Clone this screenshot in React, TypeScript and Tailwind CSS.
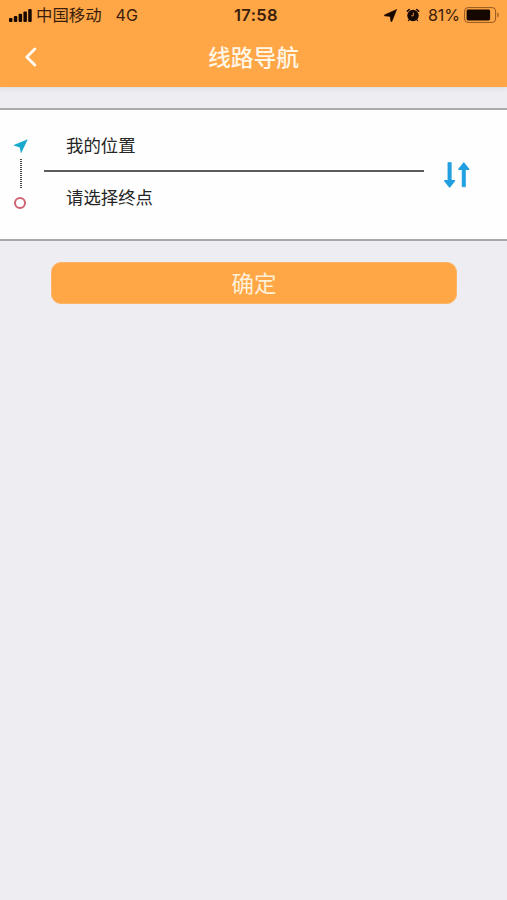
import { useState } from "react";

const signalBars = [
  { x: 0, height: 4 },
  { x: 4.8, height: 6 },
  { x: 9.6, height: 8.3 },
  { x: 14.4, height: 10.6 },
  { x: 19.2, height: 13 },
];

function StatusBar() {
  return (
    <div className="grid h-[30px] grid-cols-[1fr_auto_1fr] items-center pl-[9px] pr-[7px] text-[#3b1e0b]">
      <div className="flex items-center">
        <svg width="23" height="13" viewBox="0 0 23 13" className="fill-[#160800]">
          {signalBars.map((bar) => (
            <rect key={bar.x} x={bar.x} y={13 - bar.height} width="3.5" height={bar.height} rx="1" />
          ))}
        </svg>
        <span className="ml-[4px] text-[16.4px] leading-none">中国移动</span>
        <span className="ml-[14px] text-[16px] leading-none">4G</span>
      </div>
      <span className="pl-[3px] text-[16.5px] font-semibold leading-none tracking-[0.35px]">17:58</span>
      <div className="flex items-center justify-end">
        <svg width="13" height="13" viewBox="0 0 13 13" className="fill-[#160800]">
          <path d="M12.6.5 7.9 12.4 6.9 12.4 6.2 7.4.5 6.8.5 5.9Z" stroke="#160800" strokeWidth=".6" strokeLinejoin="round" />
        </svg>
        <svg width="14" height="14" viewBox="0 0 14 14" className="ml-[9px]">
          <circle cx="7" cy="7.5" r="5.7" fill="#160800" />
          <path d="M1.4 3.2 3.3 1.5M12.6 3.2 10.7 1.5" stroke="#160800" strokeWidth="1.6" strokeLinecap="round" />
          <path d="m3.2 11.6-1 1.4M10.8 11.6l1 1.4" stroke="#160800" strokeWidth="1.2" />
          <path d="M7.3 4.6v3.2H5.2" fill="none" stroke="#d68a3c" strokeWidth="1" />
        </svg>
        <span className="ml-[8px] text-[16px] leading-none">81%</span>
        <svg width="36" height="16" viewBox="0 0 36 16" className="ml-[4px]">
          <rect x=".6" y=".6" width="31" height="14.8" rx="3.4" fill="none" stroke="#96581f" strokeWidth="1" />
          <rect x="2.6" y="2.6" width="23.5" height="10.8" rx="1.4" fill="#160800" />
          <path d="M33.4 5.6c1.8.5 1.8 4.3 0 4.8Z" fill="#96581f" />
        </svg>
      </div>
    </div>
  );
}

function SwapIcon() {
  return (
    <svg width="26" height="26" viewBox="0 0 26 26" fill="#219fe0" stroke="#219fe0" strokeLinejoin="round">
      <path d="M3.9.5h3.4v18H3.9ZM18.1 7h3.4v17.8h-3.4Z" strokeWidth=".6" />
      <path d="M.8 18.8h9.6l-4.8 6ZM15 7.2h9.6l-4.8-6Z" strokeWidth="1.6" />
    </svg>
  );
}

export default function App() {
  const [points, setPoints] = useState(["我的位置", "请选择终点"]);

  return (
    <div className="min-h-screen bg-[#eeedf2] font-['Inter','Noto_Sans_CJK_SC',sans-serif]">
      <header className="h-[87px] bg-[#ffa646] shadow-[0_1px_5px_rgba(120,90,150,0.16)]">
        <StatusBar />
        <div className="grid h-[54px] grid-cols-[1fr_auto_1fr] items-center">
          <button type="button" aria-label="返回" className="w-fit pl-[24px]">
            <svg width="14" height="20" viewBox="0 0 14 20" fill="none" stroke="#fffaf2">
              <path d="m10.8 2-8 8 8 8" strokeWidth="2.9" strokeLinecap="round" strokeLinejoin="round" />
            </svg>
          </button>
          <h1 className="pt-[3px] text-[22.8px] font-medium leading-none text-[#fff6e6]">线路导航</h1>
        </div>
      </header>

      <section className="mt-[21px] flex h-[133px] border-y-2 border-[#a9a8ac] bg-[#fefefe]">
        <div className="flex w-[41px] shrink-0 flex-col items-center pt-[29px]">
          <svg width="15" height="15" viewBox="0 0 15 15" fill="#18a9cc">
            <path d="M14.8.2 8 14.4 6.8 8.4.2 6.2Z" />
          </svg>
          <svg width="2" height="30" viewBox="0 0 2 30" className="ml-px mt-[5px]">
            <path d="M1 0v30" stroke="#444" strokeWidth="2" strokeDasharray="1 1" />
          </svg>
          <div className="mr-px mt-[8px] h-[12px] w-[12px] rounded-full border-[2.5px] border-[#cf6372]" />
        </div>
        <div className="ml-[3px] w-[380px] text-[17.4px] leading-[26px] text-[#252525]">
          <div className="pl-[22px] pt-[23px] pb-[11px]">{points[0]}</div>
          <div className="h-[2px] bg-[#5c5c5c]" />
          <div className="pl-[22px] pt-[13px]">{points[1]}</div>
        </div>
        <button
          type="button"
          aria-label="交换"
          onClick={() => setPoints([points[1], points[0]])}
          className="ml-[20px] mt-[52px] h-[26px] w-[26px]"
        >
          <SwapIcon />
        </button>
      </section>

      <button
        type="button"
        className="ml-[51px] mt-[21px] flex h-[42px] w-[406px] items-center justify-center rounded-[10px] border border-[#fcb568] bg-[#ffa646] pt-[3px] text-[22.5px] leading-none text-[#fff0d8]"
      >
        确定
      </button>
    </div>
  );
}
